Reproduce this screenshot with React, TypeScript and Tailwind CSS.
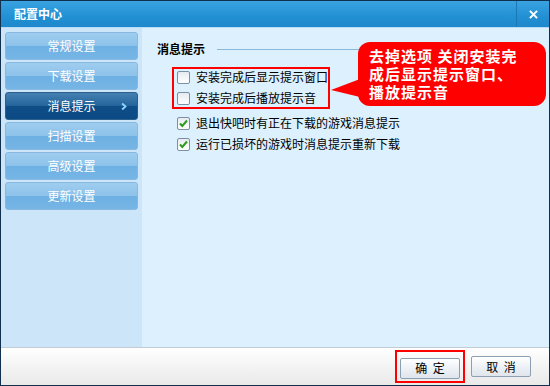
const menu = ["常规设置", "下载设置", "消息提示", "扫描设置", "高级设置", "更新设置"];

function CheckBox({ checked }: { checked: boolean }) {
  return (
    <span className="relative w-[13px] h-[13px] shrink-0 border border-[#7b8fa5] rounded-[2px] bg-[linear-gradient(to_bottom,#e6ebf0,#ffffff)]">
      {checked && (
        <svg viewBox="0 0 13 13" className="absolute -left-px -top-px w-[13px] h-[13px]">
          <path d="M3 6.5 L5.3 9 L10 3.5" fill="none" stroke="#2f9a1d" strokeWidth="2" />
        </svg>
      )}
    </span>
  );
}

function Option({ checked, label }: { checked: boolean; label: string }) {
  return (
    <div className="flex items-center h-[14px] gap-[6px]">
      <CheckBox checked={checked} />
      <span className="text-[12px] leading-[14px] text-black">{label}</span>
    </div>
  );
}

export default function App() {
  return (
    <div
      className="w-[550px] h-[386px] border border-[#10304e] flex flex-col bg-white overflow-hidden"
      style={{ fontFamily: '"Noto Sans CJK SC", "Liberation Sans", sans-serif' }}
    >
      {/* title bar */}
      <div className="h-[26px] shrink-0 flex items-center bg-[linear-gradient(to_bottom,#3aa3e1,#2290d4_60%,#1d88cb)]">
        <span className="pl-[13px] text-[12px] font-bold text-white">配置中心</span>
        <div className="ml-auto h-full w-[33px] border-l border-[#1a78b5] flex items-center justify-center">
          <svg viewBox="0 0 10 10" className="w-[9px] h-[9px]">
            <path d="M1 1 L9 9 M9 1 L1 9" stroke="#ffffff" strokeWidth="2.2" />
          </svg>
        </div>
      </div>
      <div className="h-px shrink-0 bg-[#b9dcf4]" />

      {/* body */}
      <div className="relative flex flex-1 min-h-0">
        <div className="w-[141px] shrink-0 bg-[#cde5f8] pt-[4px] px-[4px] flex flex-col gap-[2px]">
          {menu.map((m, i) => (
            <div
              key={m}
              className={`relative h-[28px] rounded-[3px] border flex items-center justify-center text-[12px] text-white ${
                i === 2
                  ? "border-[#2a5f8e] bg-[linear-gradient(to_bottom,#4580b1,#23649b_50%,#0f4d87_51%,#0b4a84)]"
                  : "border-[#86b8e0] bg-[linear-gradient(to_bottom,#9fcdef,#8cc2ea_50%,#6eb0e3_51%,#76b6e6)]"
              }`}
            >
              {m}
              {i === 2 && (
                <svg viewBox="0 0 8 10" className="absolute right-[10px] w-[6px] h-[9px]">
                  <path d="M1.5 1 L6 5 L1.5 9" fill="none" stroke="#8fd6ff" strokeWidth="2.4" />
                </svg>
              )}
            </div>
          ))}
        </div>

        <div className="flex-1 bg-[#dcf0fd] pt-[13px] pl-[15px]">
          <div className="flex items-center h-[16px] gap-[12px]">
            <span className="text-[12px] font-bold text-black leading-[16px]">消息提示</span>
            <div className="flex-1 h-px bg-[#8ab8dd] mr-[10px]" />
          </div>

          <div className="mt-[10px] ml-[15px] w-[158px] border-2 border-[#ff0000] pt-px pb-[2px] pl-[3px] flex flex-col gap-[7px]">
            <Option checked={false} label="安装完成后显示提示窗口" />
            <Option checked={false} label="安装完成后播放提示音" />
          </div>

          <div className="mt-[7px] ml-[20px] flex flex-col gap-[7px]">
            <Option checked label="退出快吧时有正在下载的游戏消息提示" />
            <Option checked label="运行已损坏的游戏时消息提示重新下载" />
          </div>
        </div>

        {/* callout */}
        <svg viewBox="0 0 30 20" className="absolute left-[329px] top-[51px] w-[30px] h-[20px]">
          <path d="M30 0 L1 11 L30 18 Z" fill="#ff0000" />
        </svg>
        <div className="absolute left-[357px] top-[14px] w-[188px] h-[64px] rounded-[12px] bg-[#ff0000] pl-[11px] pt-[5px] text-[15px] font-bold leading-[18px] tracking-[1px] text-white">
          <p className="m-0">去掉选项 关闭安装完</p>
          <p className="m-0">成后显示提示窗口、</p>
          <p className="m-0">播放提示音</p>
        </div>
      </div>

      {/* footer */}
      <div className="h-[38px] shrink-0 border-t border-[#c3ccd5] bg-[linear-gradient(to_bottom,#ffffff,#f6f6f6_40%,#e9e9e9)] flex items-center justify-end pr-[18px] gap-[6px]">
        <div className="border-2 border-[#ff0000] px-[3px] py-[2px]">
          <button
            type="button"
            className="w-[60px] h-[21px] rounded-[2px] border border-[#8d9fb3] bg-[linear-gradient(to_bottom,#ffffff,#eef2f6_50%,#dfe5ec)] text-[12px] text-black leading-none"
          >
            确&nbsp;&nbsp;定
          </button>
        </div>
        <button
          type="button"
          className="w-[60px] h-[21px] rounded-[2px] border border-[#8d9fb3] bg-[linear-gradient(to_bottom,#ffffff,#eef2f6_50%,#dfe5ec)] text-[12px] text-black leading-none"
        >
          取&nbsp;&nbsp;消
        </button>
      </div>
    </div>
  );
}
